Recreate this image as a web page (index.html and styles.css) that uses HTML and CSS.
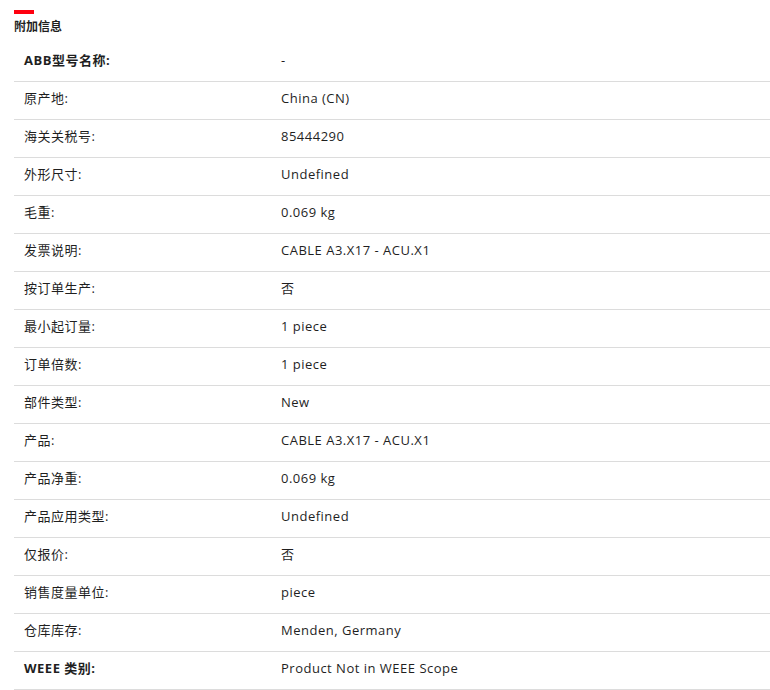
FILE: index.html
```html
<!DOCTYPE html>
<html lang="zh">
<head>
<meta charset="utf-8">
<link rel="stylesheet" href="styles.css">
</head>
<body>
<section class="info">
  <div class="bar"></div>
  <h2 class="title">附加信息</h2>
  <table class="attrs">
    <tr><td class="k strong">ABB型号名称:</td><td class="v">-</td></tr>
    <tr><td class="k">原产地:</td><td class="v">China (CN)</td></tr>
    <tr><td class="k">海关关税号:</td><td class="v">85444290</td></tr>
    <tr><td class="k">外形尺寸:</td><td class="v">Undefined</td></tr>
    <tr><td class="k">毛重:</td><td class="v">0.069 kg</td></tr>
    <tr><td class="k">发票说明:</td><td class="v">CABLE A3.X17 - ACU.X1</td></tr>
    <tr><td class="k">按订单生产:</td><td class="v">否</td></tr>
    <tr><td class="k">最小起订量:</td><td class="v">1 piece</td></tr>
    <tr><td class="k">订单倍数:</td><td class="v">1 piece</td></tr>
    <tr><td class="k">部件类型:</td><td class="v">New</td></tr>
    <tr><td class="k">产品:</td><td class="v">CABLE A3.X17 - ACU.X1</td></tr>
    <tr><td class="k">产品净重:</td><td class="v">0.069 kg</td></tr>
    <tr><td class="k">产品应用类型:</td><td class="v">Undefined</td></tr>
    <tr><td class="k">仅报价:</td><td class="v">否</td></tr>
    <tr><td class="k">销售度量单位:</td><td class="v">piece</td></tr>
    <tr><td class="k">仓库库存:</td><td class="v">Menden, Germany</td></tr>
    <tr><td class="k strong">WEEE 类别:</td><td class="v">Product Not in WEEE Scope</td></tr>
  </table>
</section>
</body>
</html>
```

FILE: styles.css
```css
html, body {
  margin: 0;
  padding: 0;
  background: #fff;
}
body {
  font-family: "Open Sans", "Noto Sans CJK SC", sans-serif;
  color: #1f1f1f;
}
.info {
  padding: 10px 0 0 14px;
}
.bar {
  width: 20px;
  height: 4px;
  background: #ff000f;
}
.title {
  margin: 5px 0 0 0;
  font-size: 12px;
  line-height: 16px;
  font-weight: 700;
  color: #1f1f1f;
}
.attrs {
  width: 756px;
  border-collapse: collapse;
  margin-top: 8px;
  font-size: 13px;
  letter-spacing: 0.5px;
}
.attrs tr {
  border-bottom: 1px solid #dcdcdc;
}
.attrs td {
  height: 38px;
  padding: 0 10px 4px 10px;
  box-sizing: border-box;
  vertical-align: middle;
  line-height: 18px;
}
.k {
  width: 257px;
}
.strong {
  font-weight: 700;
}
```
